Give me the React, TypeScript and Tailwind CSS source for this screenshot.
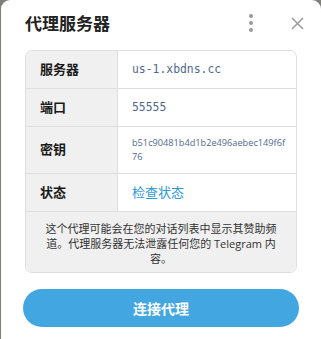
export default function App() {
  const rows = [
    { label: '服务器', value: 'us-1.xbdns.cc', kind: 'mono' },
    { label: '端口', value: '55555', kind: 'mono' },
    { label: '密钥', value: 'b51c90481b4d1b2e496aebec149f6f76', kind: 'key' },
    { label: '状态', value: '检查状态', kind: 'link' },
  ]

  return (
    <div className="w-[321px] h-[339px] bg-[#7d7f78] pl-[1px] overflow-hidden">
      <div className="h-full bg-white rounded-t-[9px] font-['Open_Sans','Noto_Sans_CJK_SC',sans-serif] text-[#222]">
        <div className="flex items-center h-[46px] pl-[24px] pr-[17px]">
          <h1 className="text-[17px] font-bold flex-1 leading-none">代理服务器</h1>
          <div className="flex flex-col gap-[3px] mr-[38px]">
            <span className="w-[4px] h-[4px] rounded-full bg-[#999]" />
            <span className="w-[4px] h-[4px] rounded-full bg-[#999]" />
            <span className="w-[4px] h-[4px] rounded-full bg-[#999]" />
          </div>
          <svg width="13" height="13" viewBox="0 0 13 13" className="text-[#9a9a9a]">
            <path d="M1 1L12 12M12 1L1 12" stroke="currentColor" strokeWidth="1.5" />
          </svg>
        </div>

        <div className="mx-[24px] mt-[4px] border border-[#dedede] rounded-[7px] overflow-hidden">
          {rows.map((r) => (
            <div
              key={r.label}
              className={`flex border-b border-[#dedede] ${r.kind === 'key' ? 'h-[47px]' : 'h-[38px]'}`}
            >
              <div className="w-[92px] shrink-0 bg-[#f0f0f0] border-r border-[#dedede] flex items-center pl-[14px] text-[13px] font-bold text-[#1a1a1a]">
                {r.label}
              </div>
              <div className="flex-1 flex items-center pl-[14px] pr-[10px]">
                {r.kind === 'mono' && (
                  <span className="font-['DejaVu_Sans_Mono',monospace] text-[11.4px] text-[#52698a]">
                    {r.value}
                  </span>
                )}
                {r.kind === 'key' && (
                  <span className="text-[9.2px] leading-[14px] text-[#4f6a8f] break-all w-[154px]">
                    {r.value}
                  </span>
                )}
                {r.kind === 'link' && (
                  <span className="text-[13px] text-[#2d9ad8]">{r.value}</span>
                )}
              </div>
            </div>
          ))}
          <div className="bg-[#f0f0f0] px-[18px] pt-[9px] pb-[6px] text-center text-[11px] leading-[15px] text-[#333]">
            这个代理可能会在您的对话列表中显示其赞助频道。代理服务器无法泄露任何您的 Telegram 内容。
          </div>
        </div>

        <div className="px-[22px] mt-[16px]">
          <button className="w-full h-[38px] rounded-full bg-[#42a7e1] text-white text-[14px] font-bold">
            连接代理
          </button>
        </div>
      </div>
    </div>
  )
}
